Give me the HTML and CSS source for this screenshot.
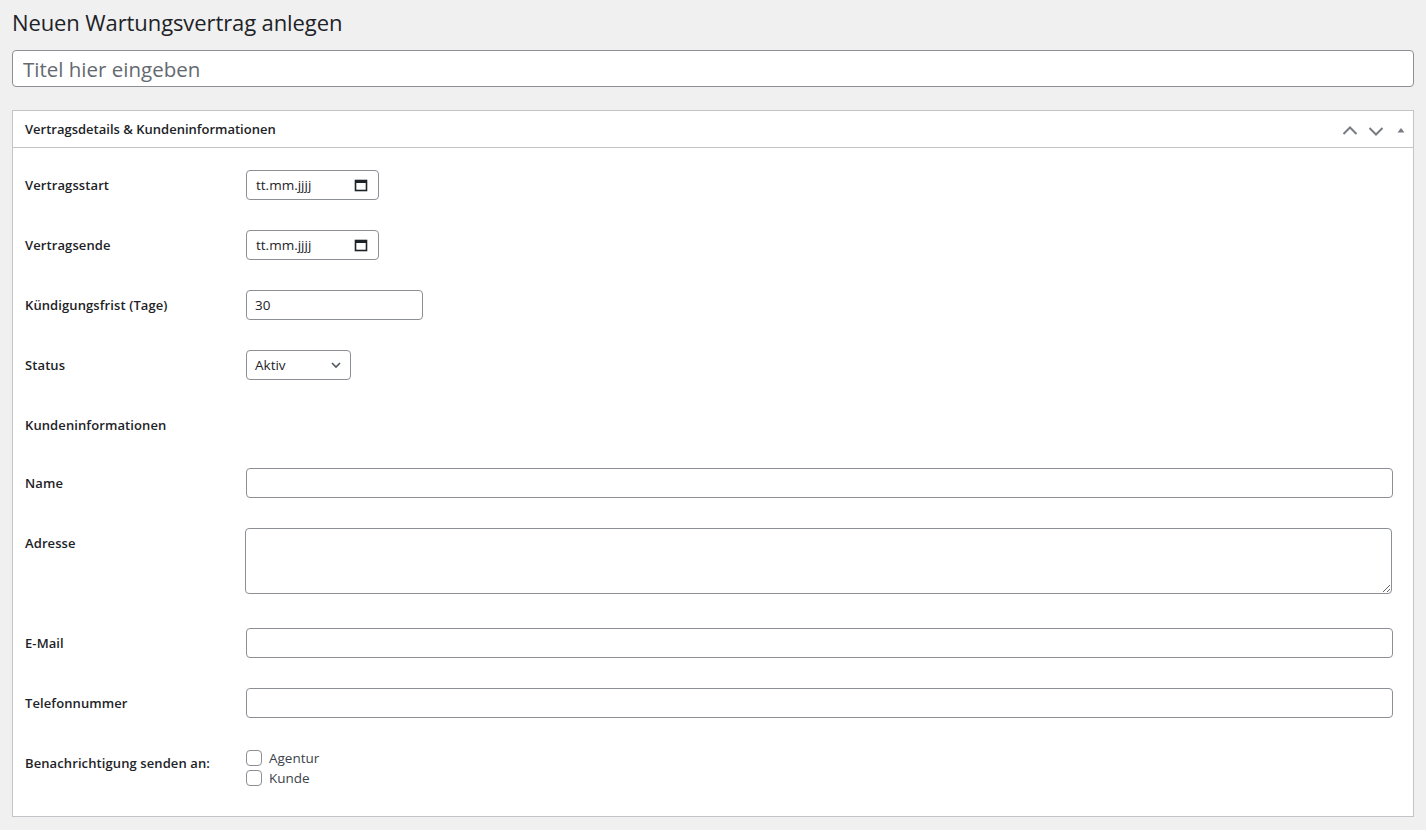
FILE: index.html
```html
<!DOCTYPE html>
<html lang="de">
<head>
<meta charset="utf-8">
<title>Neuen Wartungsvertrag anlegen</title>
<link rel="stylesheet" href="styles.css">
</head>
<body>
<div class="wrap">
  <h1 class="page-title">Neuen Wartungsvertrag anlegen</h1>
  <input class="title-input" type="text" placeholder="Titel hier eingeben">

  <div class="postbox">
    <div class="postbox-header">
      <h2 class="postbox-title">Vertragsdetails &amp; Kundeninformationen</h2>
      <div class="handle-actions">
        <svg class="hicon" width="16" height="16" viewBox="0 0 16 16"><path d="M1.5 13 L8 6.5 L14.5 13" fill="none" stroke="#787c82" stroke-width="2"/></svg>
        <svg class="hicon" width="16" height="16" viewBox="0 0 16 16"><path d="M1.5 7 L8 13.5 L14.5 7" fill="none" stroke="#787c82" stroke-width="2"/></svg>
        <svg class="hicon tri" width="12" height="16" viewBox="0 0 12 16"><path d="M2.5 11.5 L6 7 L9.5 11.5 Z" fill="#787c82"/></svg>
      </div>
    </div>
    <div class="inside">
      <table class="form-table">
        <tr>
          <th>Vertragsstart</th>
          <td><div class="date-input"><span>tt.mm.jjjj</span><svg width="14" height="14" viewBox="0 0 14 14"><rect x="1.5" y="2.5" width="11" height="10" fill="none" stroke="#1d2327" stroke-width="1.6"/><rect x="1.5" y="2" width="11" height="3" fill="#1d2327"/></svg></div></td>
        </tr>
        <tr>
          <th>Vertragsende</th>
          <td><div class="date-input"><span>tt.mm.jjjj</span><svg width="14" height="14" viewBox="0 0 14 14"><rect x="1.5" y="2.5" width="11" height="10" fill="none" stroke="#1d2327" stroke-width="1.6"/><rect x="1.5" y="2" width="11" height="3" fill="#1d2327"/></svg></div></td>
        </tr>
        <tr>
          <th>Kündigungsfrist (Tage)</th>
          <td><input class="num-input" type="text" value="30"></td>
        </tr>
        <tr>
          <th>Status</th>
          <td><div class="select"><span>Aktiv</span><svg width="12" height="12" viewBox="0 0 12 12"><path d="M2 4 L6 8 L10 4" fill="none" stroke="#50575e" stroke-width="1.6"/></svg></div></td>
        </tr>
        <tr class="section-row">
          <th>Kundeninformationen</th>
          <td></td>
        </tr>
        <tr>
          <th>Name</th>
          <td><input class="wide-input" type="text"></td>
        </tr>
        <tr>
          <th>Adresse</th>
          <td><textarea class="wide-area"></textarea></td>
        </tr>
        <tr>
          <th>E-Mail</th>
          <td><input class="wide-input" type="text"></td>
        </tr>
        <tr>
          <th>Telefonnummer</th>
          <td><input class="wide-input" type="text"></td>
        </tr>
        <tr>
          <th>Benachrichtigung senden an:</th>
          <td class="checks">
            <label class="check"><span class="box"></span>Agentur</label>
            <label class="check"><span class="box"></span>Kunde</label>
          </td>
        </tr>
      </table>
    </div>
  </div>
</div>
</body>
</html>
```
FILE: styles.css
```css
* { box-sizing: border-box; }
html, body { margin: 0; padding: 0; }
body {
  background: #f0f0f1;
  color: #1d2327;
  font-family: "Open Sans", "Noto Sans", sans-serif;
  font-size: 13px;
}
.wrap { padding: 0 12px; }
.page-title {
  margin: 0;
  padding: 8px 0 13px;
  font-size: 22px;
  font-weight: 400;
  line-height: 1.3;
  letter-spacing: -0.1px;
}
.title-input {
  display: block;
  width: 100%;
  height: 37px;
  margin: 0;
  padding: 4px 10px 3px;
  font-family: inherit;
  font-size: 20.5px;
  border: 1px solid #8c8f94;
  border-radius: 4px;
  background: #fff;
  color: #1d2327;
  outline: none;
}
.title-input::placeholder { color: #646970; }
.postbox {
  margin-top: 23px;
  background: #fff;
  border: 1px solid #c3c4c7;
}
.postbox-header {
  height: 37px;
  display: flex;
  align-items: center;
  justify-content: space-between;
  border-bottom: 1px solid #c3c4c7;
  padding: 0 6px 0 12px;
}
.postbox-title {
  margin: 0;
  font-size: 13px;
  font-weight: 600;
  letter-spacing: 0;
}
.handle-actions { display: flex; align-items: center; gap: 10px; }
.hicon { display: block; }
.hicon.tri { margin-left: 1.5px; }
.inside { padding: 7px 12px 13px; }
.form-table { width: 100%; border-collapse: collapse; }
.form-table th {
  width: 210px;
  padding: 21px 10px 19px 0;
  text-align: left;
  vertical-align: top;
  font-size: 13px;
  font-weight: 600;
  line-height: 18px;
  letter-spacing: 0.1px;
}
.form-table td {
  padding: 15px 8px 15px 11px;
  vertical-align: top;
}
.date-input, .num-input, .select, .wide-input, .wide-area {
  border: 1px solid #8c8f94;
  border-radius: 4px;
  background: #fff;
  font-family: inherit;
  font-size: 13.5px;
  color: #1d2327;
}
.date-input {
  width: 133px;
  height: 30px;
  display: flex;
  align-items: center;
  justify-content: space-between;
  padding: 0 10px 0 9px;
}
.date-input svg { display: block; }
.num-input {
  display: block;
  width: 177px;
  height: 30px;
  padding: 0 8px;
  outline: none;
}
.select {
  width: 105px;
  height: 30px;
  display: flex;
  align-items: center;
  justify-content: space-between;
  padding: 0 8px 0 8px;
}
.select svg { display: block; }
.wide-input {
  display: block;
  width: 100%;
  height: 30px;
  padding: 0 8px;
  outline: none;
}
.wide-area {
  display: block;
  width: 100%;
  height: 66px;
  margin-left: -1px;
  margin-bottom: 4px;
  padding: 2px 6px;
  resize: vertical;
  outline: none;
}
.check {
  display: flex;
  align-items: center;
  gap: 7px;
  height: 20px;
  font-size: 13.5px;
  color: #3c434a;
}
.box {
  width: 16px;
  height: 16px;
  border: 1px solid #8c8f94;
  border-radius: 4px;
  background: #fff;
}
```
